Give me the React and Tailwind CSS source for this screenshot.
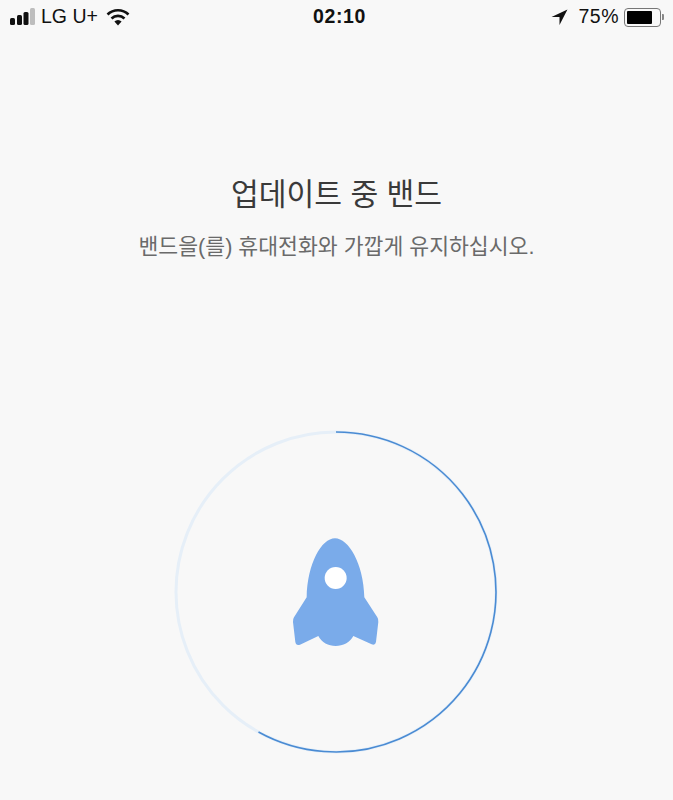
import React from "react";

const StatusBar = () => {
  return (
    <div className="relative flex h-[34px] items-center justify-between pl-[10px] pr-[9px] text-[19.5px] text-[#111]">
      <div className="flex items-center">
        <svg width="26" height="18" viewBox="0 0 26 18" fill="#111">
          <rect x="0" y="10" width="5" height="7" rx="1.5" />
          <rect x="7" y="7" width="5" height="10" rx="1.5" />
          <rect x="13.5" y="4" width="5" height="13" rx="1.5" />
          <rect x="20" y="0" width="5" height="17" rx="1.5" fill="#bdbdbd" />
        </svg>
        <span className="ml-[5px]">LG U+</span>
        <svg className="ml-[8px]" width="24" height="18" viewBox="0 0 24 18" fill="none" stroke="#111" strokeWidth="2.6">
          <path d="M1.5 6.5a15 15 0 0 1 21 0" />
          <path d="M5.5 10.5a9.4 9.4 0 0 1 13 0" />
          <path d="M12 17.5l-3.6-4a5 5 0 0 1 7.2 0z" fill="#111" stroke="none" />
        </svg>
      </div>
      <span className="absolute left-[313px] font-bold tracking-[0.6px]">02:10</span>
      <div className="flex items-center">
        <svg width="17" height="17" viewBox="0 0 16 16" fill="#111">
          <path d="M15.5 0.5L0.5 7.5h7.5v7.5z" />
        </svg>
        <span className="ml-[10px] tracking-[0.5px]">75%</span>
        <div className="ml-[5px] h-[19px] w-[37px] rounded-[4px] border border-[#777] p-[2px]">
          <div className="h-full w-[25px] rounded-[1px] bg-black" />
        </div>
        <div className="ml-[1px] h-[6px] w-[2px] rounded-r-[1px] bg-[#888]" />
      </div>
    </div>
  );
};

const ProgressRing = () => {
  return (
    <svg width="330" height="330" viewBox="0 0 330 330" fill="none">
      <circle cx="165" cy="165" r="160" stroke="#e6eff8" strokeWidth="3" />
      <path d="M165 5A160 160 0 1 1 87.5 305" stroke="#4a8bd3" strokeWidth="1.6" />
      {/* rocket */}
      <g transform="translate(99 93) scale(0.3333)">
        <path
          fill="#7aabea"
          d="M195 55C155 55 112 130 110 232L72 292Q68 298 69 306L76 366Q78 378 90 374L145 348C155 368 175 378 197 378C219 378 240 368 250 348L305 373Q316 377 318 366L325 306Q326 298 322 292L283 232C281 130 235 55 195 55Z"
        />
        <circle cx="197" cy="174" r="33" fill="#fff" />
      </g>
    </svg>
  );
};

export default function App() {
  return (
    <div
      className="flex h-[800px] w-[673px] flex-col overflow-hidden bg-[#f8f8f8]"
      style={{ fontFamily: '"Liberation Sans", "Noto Sans CJK KR", sans-serif' }}
    >
      <StatusBar />
      <div className="mt-[141px] flex flex-col items-center">
        <h1 className="text-[30.2px] leading-[40px] font-normal text-[#3a3a3a]">업데이트 중 밴드</h1>
        <p className="mt-[18px] text-[21.6px] leading-[28px] text-[#6a6a6a]">밴드을(를) 휴대전화와 가깝게 유지하십시오.</p>
      </div>
      <div className="mt-[166px] flex justify-center pr-[2px]">
        <ProgressRing />
      </div>
    </div>
  );
}
